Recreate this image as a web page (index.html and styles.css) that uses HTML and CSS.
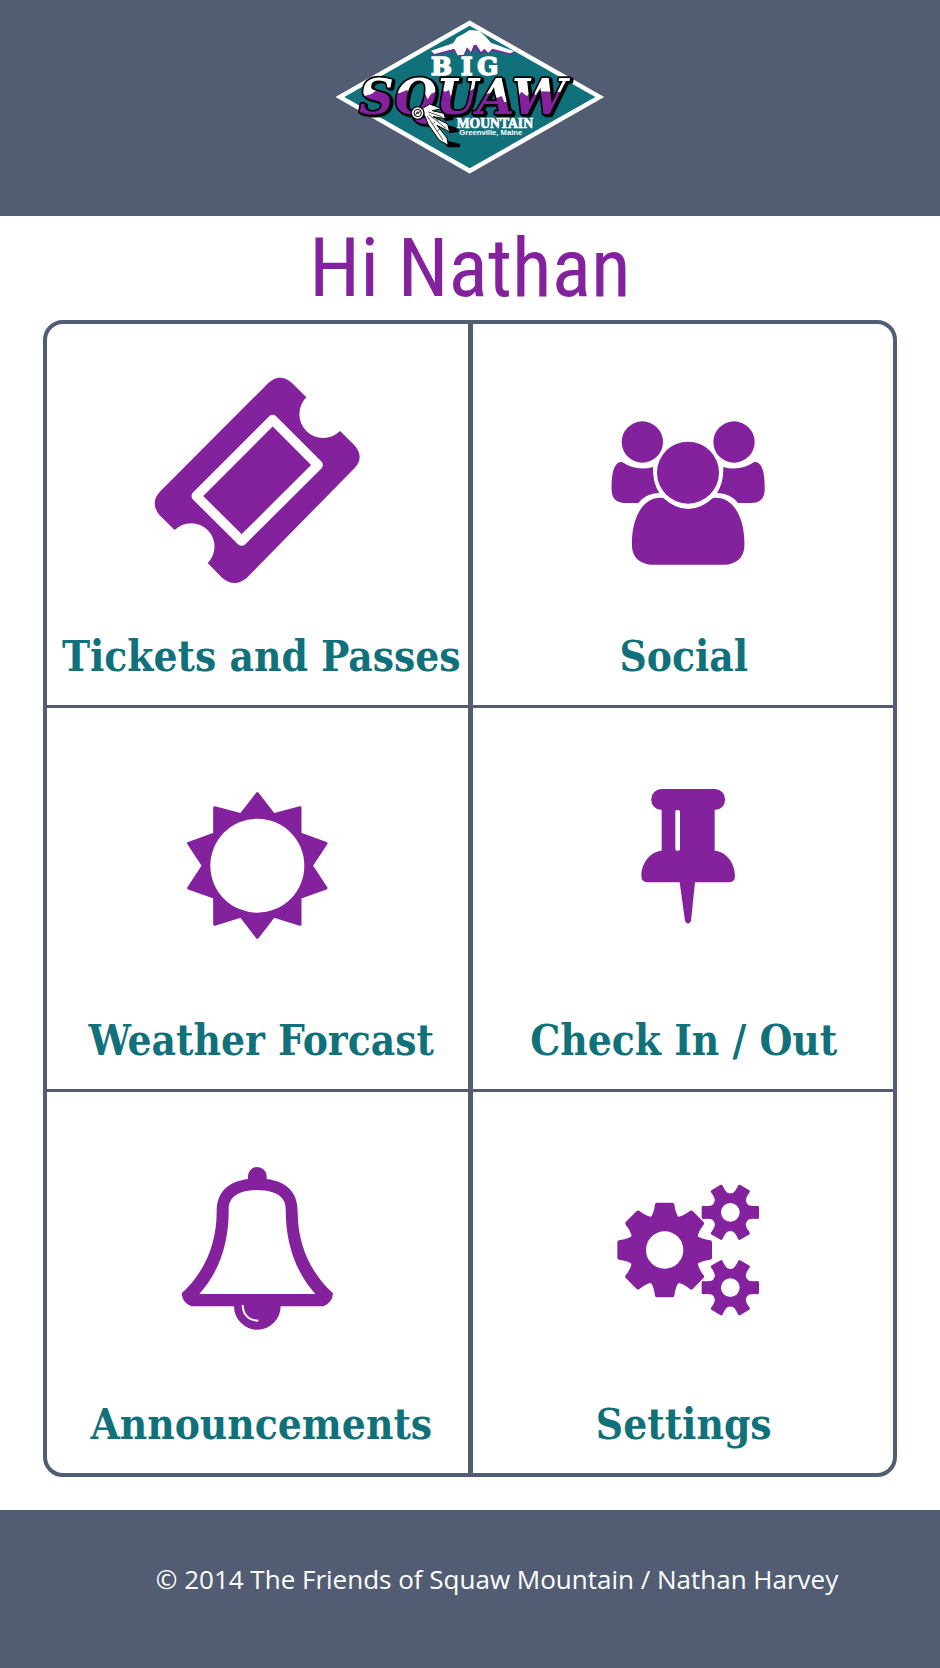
FILE: index.html
```html
<!DOCTYPE html>
<html lang="en">
<head>
<meta charset="utf-8">
<meta name="viewport" content="width=device-width, initial-scale=1">
<title>Big Squaw Mountain</title>
<link rel="stylesheet" href="styles.css">
</head>
<body>
<header class="site-header">
  <svg class="logo" viewBox="0 0 870 525" role="img" aria-label="Big Squaw Mountain, Greenville, Maine">
    <defs>
      <pattern id="snow" patternUnits="userSpaceOnUse" x="0" y="0" width="870" height="525">
        <rect width="870" height="525" fill="#84229e"/>
        <path fill="#fff" d="M90 180H780V244L722 248 716 266 710 246 640 244 632 256 622 242 606 258 590 246 574 262 562 242 550 250 546 276 538 276 530 258 516 264 506 246 484 252 470 240 446 236 430 246 420 234 384 238 378 262 372 240 360 246 350 236 318 252 308 268 300 250 286 262 276 244 256 252 246 240 222 250 200 246 160 236 140 252 118 258 90 240Z"/>
      </pattern>
    </defs>
    <path d="M434 30 840 261 434 492 29 261Z" fill="#fff" stroke="#3b414f" stroke-width="2"/>
    <path d="M434 47 811 261 434 475 58 261Z" fill="#10717b"/>
    <path d="M320 128 386 113 397 82 420 72 436 62 462 64 483 82 502 102 566 128 560 134 500 122 492 130 476 124 466 134 452 112 440 132 428 118 414 142 396 136 388 122 330 135Z" fill="#84229e"/>
    <path d="M318 122 384 100 396 82 420 69 434 60 462 62 480 78 498 98 568 124 556 130 502 116 490 128 478 116 468 126 454 104 446 106 438 126 426 112 416 134 398 136 388 116 328 132Z" fill="#fff"/>
    <text class="logo-big" x="318 408 457" y="195">BIG</text>
    <text class="logo-name" x="102" y="312" fill="url(#snow)">SQUAW</text>
    <path d="M350 312 384 318 386 330 360 334ZM364 344 400 354 402 366 374 370ZM350 388 406 402 404 412 368 412Z"/>
    <path d="M288 298 314 282 350 296 322 302 356 310 362 326 324 320 368 342 374 366 336 346 366 384 370 406 342 390 310 344 300 320Z" fill="#fff" stroke="#000" stroke-width="3"/>
    <path d="M306 318 354 390M312 314 364 356M310 306 350 320M322 342 330 336M336 364 344 356M334 326 340 334" fill="none" stroke="#000" stroke-width="2"/>
    <circle cx="278" cy="309" r="19" fill="#fff" stroke="#000" stroke-width="4"/>
    <circle cx="278" cy="309" r="11" fill="#fff" stroke="#000" stroke-width="3"/>
    <path d="M272 314 278 305 279 311 285 304" fill="none" stroke="#000" stroke-width="3"/>
    <text class="logo-mountain" x="395" y="355">MOUNTAIN</text>
    <text class="logo-place" x="403" y="376">Greenville, Maine</text>
  </svg>
</header>

<main class="content">
  <h1 class="greeting">Hi Nathan</h1>
  <nav class="menu" aria-label="Main menu">
    <a class="tile" href="#tickets">
      <svg class="icon" viewBox="-8 0 720 720" aria-hidden="true">
        <path d="M386 69Q421 38 457 69L500 112A69 69 0 0 0 601 213L643 254Q676 291 645 324L321 654Q284 684 248 654L204 609A69 69 0 0 0 105 510L60 466Q29 428 62 394Z"/>
        <path class="cutout-line" d="M399 179 535 315 306 543 170 408Z"/>
      </svg>
      <span class="label">Tickets and Passes</span>
    </a>
    <a class="tile tile-end" href="#social">
      <svg class="icon" viewBox="-96 -150 720 720" aria-hidden="true">
        <circle cx="127" cy="96" r="62"/>
        <circle cx="402" cy="96" r="62"/>
        <path id="arm" d="M66 156C40 154 34 196 35 243Q37 277 74 279H115Q136 251 178 249Q158 219 159 171Q110 185 66 156Z"/>
        <use href="#arm" transform="matrix(-1 0 0 1 529 0)"/>
        <circle cx="264" cy="188" r="93"/>
        <path d="M190 264C128 257 92 327 96 412Q101 459 151 464H379Q428 459 433 412C437 327 401 257 339 264Q264 330 190 264Z"/>
      </svg>
      <span class="label">Social</span>
    </a>
    <a class="tile" href="#weather">
      <svg class="icon" viewBox="-98 -108 720 720" aria-hidden="true">
        <path class="soft" d="M263 41 312 104 391 83V162L469 190 425 257 469 324 391 352V433L312 408 263 472 214 408 135 433V352L57 324 101 257 57 190 135 162V83L214 104Z"/>
        <circle class="cutout" cx="263" cy="257" r="141"/>
      </svg>
      <span class="label">Weather Forcast</span>
    </a>
    <a class="tile tile-end" href="#check-in">
      <svg class="icon" viewBox="-186 -108 720 720" aria-hidden="true">
        <path d="M95 27H254A31 31 0 0 1 254 90V212C292 216 315 252 315 288Q315 306 298 307H195L183 423Q174 438 165 423L149 307H52Q34 306 34 288C34 252 57 216 95 212V90A31 31 0 0 1 95 27Z"/>
        <rect class="cutout" x="136" y="90" width="14" height="122" rx="5"/>
      </svg>
      <span class="label">Check In / Out</span>
    </a>
    <a class="tile" href="#announcements">
      <svg class="icon" viewBox="-98 -81 720 720" aria-hidden="true">
        <path d="M235 72V64A28 28 0 0 1 291 64V72C352 80 384 112 384 170C384 272 425 356 490 415Q488 444 461 454H333A70 70 0 0 1 193 454H65Q38 444 36 415C101 356 141 272 141 170C141 112 174 80 235 72Z"/>
        <path class="cutout" d="M263 105C206 106 177 126 177 162C178 264 150 348 89 417H437C376 348 348 264 348 162C348 126 320 106 263 105Z"/>
        <path class="glint" d="M219 450Q221 495 266 497"/>
      </svg>
      <span class="label">Announcements</span>
    </a>
    <a class="tile tile-end" href="#settings">
      <svg class="icon" viewBox="-96 -126 720 720" aria-hidden="true">
        <defs>
          <path id="tooth-l" d="M-44-94Q-32-110-29-137Q-28-142-23-142H23Q28-142 29-137Q32-110 44-94Z"/>
          <path id="tooth-s" d="M50-26Q55-17 82-20Q86-19 86-16V16Q86 19 82 20Q55 17 50 26Z"/>
          <g id="gear-s">
            <circle r="57"/>
            <use href="#tooth-s"/>
            <use href="#tooth-s" transform="rotate(60)"/>
            <use href="#tooth-s" transform="rotate(120)"/>
            <use href="#tooth-s" transform="rotate(180)"/>
            <use href="#tooth-s" transform="rotate(240)"/>
            <use href="#tooth-s" transform="rotate(300)"/>
            <circle class="cutout" r="28"/>
          </g>
        </defs>
        <g transform="translate(194 240)">
          <circle r="108"/>
          <use href="#tooth-l"/>
          <use href="#tooth-l" transform="rotate(45)"/>
          <use href="#tooth-l" transform="rotate(90)"/>
          <use href="#tooth-l" transform="rotate(135)"/>
          <use href="#tooth-l" transform="rotate(180)"/>
          <use href="#tooth-l" transform="rotate(225)"/>
          <use href="#tooth-l" transform="rotate(270)"/>
          <use href="#tooth-l" transform="rotate(315)"/>
          <circle class="cutout" r="56"/>
        </g>
        <use href="#gear-s" x="391" y="127"/>
        <use href="#gear-s" x="391" y="353"/>
      </svg>
      <span class="label">Settings</span>
    </a>
  </nav>
</main>

<footer class="site-footer">
  <p class="copyright">© 2014 The Friends of Squaw Mountain / Nathan Harvey</p>
</footer>
</body>
</html>
```
FILE: styles.css
```css
:root {
  --slate: #525d73;
  --purple: #84229e;
  --teal: #10717b;
}

* {
  box-sizing: border-box;
}

body {
  margin: 0;
  min-height: 100vh;
  display: flex;
  flex-direction: column;
  background: #fff;
  font-family: "Open Sans", "Noto Sans", sans-serif;
}

.site-header {
  display: flex;
  justify-content: center;
  padding: 10px 0 31px;
  background: var(--slate);
}

.logo {
  width: 290px;
  height: 175px;
}

.logo-big,
.logo-mountain {
  fill: #fff;
  font-family: "DejaVu Serif", serif;
  font-weight: 700;
  font-size: 74px;
}

.logo-big {
  stroke: #fff;
  stroke-width: 5px;
}

.logo-mountain {
  font-family: "Liberation Serif", serif;
  font-size: 41px;
  stroke: #fff;
  stroke-width: 2px;
}

.logo-name {
  font-family: "DejaVu Serif", serif;
  font-weight: 700;
  font-style: italic;
  font-size: 145px;
  stroke: #000;
  stroke-width: 10px;
  stroke-linejoin: round;
  paint-order: stroke;
  filter: drop-shadow(6px 4px 0 #000);
}

.logo-place {
  fill: #fff;
  font-family: "Liberation Sans", sans-serif;
  font-weight: 700;
  font-size: 23px;
}

.content {
  padding: 0 43px 33px;
}

.greeting {
  margin: 0;
  color: var(--purple);
  font-family: "Roboto Condensed", Roboto, sans-serif;
  font-weight: 400;
  font-size: 82px;
  line-height: 104px;
  text-align: center;
}

.menu {
  display: grid;
  grid-template-columns: 1fr 1fr;
  grid-auto-rows: minmax(381px, auto);
  gap: 3px 5px;
  overflow: hidden;
  border: 4px solid var(--slate);
  border-radius: 20px;
  background: var(--slate);
}

.tile {
  display: flex;
  flex-direction: column;
  align-items: center;
  justify-content: space-between;
  padding: 36px 0 24px;
  background: #fff;
  color: var(--teal);
  text-decoration: none;
}

.tile-end {
  padding-left: 10px;
}

.icon {
  width: 240px;
  height: 240px;
  fill: var(--purple);
}

.cutout {
  fill: #fff;
}

.cutout-line {
  fill: none;
  stroke: #fff;
  stroke-width: 29px;
  stroke-linejoin: round;
}

.soft {
  stroke: var(--purple);
  stroke-width: 9px;
  stroke-linejoin: round;
}

.glint {
  fill: none;
  stroke: #fff;
  stroke-width: 6px;
}

.label {
  padding-left: 8px;
  font-family: "DejaVu Serif Condensed", "DejaVu Serif", serif;
  font-weight: 700;
  font-size: 42px;
  line-height: 48px;
  white-space: nowrap;
}

.tile-end .label {
  padding: 0 8px 0 0;
}

.site-footer {
  flex: 1;
  padding: 49px 0 60px 54px;
  background: var(--slate);
  color: #fff;
}

.copyright {
  margin: 0;
  font-size: 26px;
  line-height: 40px;
  text-align: center;
}
```
